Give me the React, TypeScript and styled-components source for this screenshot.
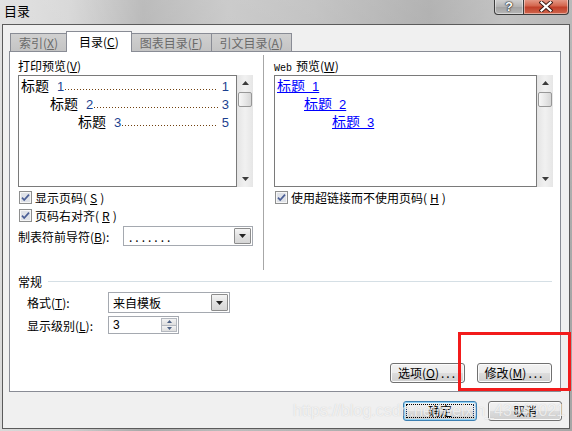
import styled, { createGlobalStyle, css } from 'styled-components';

const GlobalStyle = createGlobalStyle`
  html, body { margin: 0; padding: 0; }
  body { width: 572px; height: 431px; overflow: hidden; background: #b0b0b0; }
  *, *::before, *::after { box-sizing: border-box; }
`;

const Window = styled.div`
  position: relative;
  width: 572px;
  height: 431px;
  display: flex;
  flex-direction: column;
  padding: 0 2px 2px 2px;
  background:
    linear-gradient(180deg, rgba(255, 255, 255, 0.22), rgba(255, 255, 255, 0) 70%),
    linear-gradient(90deg, #dadada 0%, #cfcfcf 12%, #a9a9a9 25%, #bdbdbd 40%, #b4b4b4 55%, #9e9e9e 75%, #b2b2b2 88%, #a6a6a6 100%);
  font-family: "Noto Sans CJK SC", "Liberation Sans", sans-serif;
  font-size: 12px;
  color: #000;
  overflow: hidden;
`;

const TitleBar = styled.div`
  height: 24px;
  display: flex;
  justify-content: space-between;
  align-items: flex-start;
`;

const Title = styled.div`
  padding: 3px 0 0 2px;
  font-size: 13px;
  line-height: 16px;
`;

const Controls = styled.div`
  display: flex;
  margin-right: 1px;
`;

const CtrlButton = styled.div<{ $close?: boolean }>`
  width: ${p => (p.$close ? 46 : 30)}px;
  height: 16px;
  margin-top: -1px;
  display: flex;
  align-items: center;
  justify-content: center;
  border: 1px solid #3d3d3d;
  border-top: none;
  background: linear-gradient(#d4d4d4, #b4b4b4 50%, #a2a2a2 51%, #b6b6b6);
  box-shadow: inset 0 0 0 1px rgba(255, 255, 255, 0.45);
  color: #fff;
  font-family: "Liberation Sans", sans-serif;
  font-weight: 700;
  font-size: 13px;
  line-height: 14px;
  text-shadow: 0 0 1px #222, 0 0 1px #222, 0 0 2px #333;
  ${p => p.$close && css`
    margin-left: -1px;
    border-radius: 0 0 4px 0;
    background: linear-gradient(#e7a08f, #d4674f 45%, #c1402a 55%, #d0664d);
  `}
  ${p => !p.$close && css`border-radius: 0 0 0 4px;`}
`;

const Client = styled.div`
  flex: 1;
  display: flex;
  flex-direction: column;
  border: 1px solid #5b5b5b;
  background: #f0f0f0;
  padding: 6px 8px 0 6px;
`;

const TabRow = styled.div`
  display: flex;
  align-items: flex-end;
  height: 20px;
  padding-left: 1px;
`;

const Tab = styled.div<{ $active?: boolean }>`
  height: 18px;
  padding: 0 8px;
  margin-left: -1px;
  border: 1px solid #898c95;
  border-bottom: none;
  background: linear-gradient(#d0d0d0, #c4c4c4);
  color: #6a6a6a;
  line-height: 17px;
  white-space: nowrap;
  &:first-child { margin-left: 0; }
  ${p => p.$active && css`
    position: relative;
    z-index: 1;
    height: 21px;
    margin-bottom: -1px;
    padding: 0 12px;
    background: #fff;
    color: #000;
    line-height: 20px;
  `}
`;

const Key = styled.span`
  text-decoration: underline;
`;

const Panel = styled.div`
  flex: 1;
  display: flex;
  flex-direction: column;
  border: 1px solid #898c95;
  background: #fff;
  padding: 3px 7px 8px 8px;
`;

const TopSection = styled.div`
  display: flex;
  height: 215px;
`;

const Column = styled.div<{ $width?: number }>`
  display: flex;
  flex-direction: column;
  padding-top: 3px;
  ${p => (p.$width ? css`width: ${p.$width}px;` : css`flex: 1;`)}
`;

const Separator = styled.div`
  width: 1px;
  margin: 0 10px;
  background: #a7a7a7;
`;

const FieldLabel = styled.div`
  height: 16px;
  line-height: 16px;
  white-space: nowrap;
`;

const Mono = styled.span`
  font-family: "Liberation Mono", monospace;
  font-size: 10px;
  margin-right: 4px;
`;

const Preview = styled.div`
  display: flex;
  height: 112px;
  margin-top: 1px;
`;

const ListBox = styled.div`
  flex: 1;
  border: 1px solid #7a7a7a;
  background: #fff;
  padding: 0 7px 0 2px;
`;

const Scrollbar = styled.div`
  width: 16px;
  display: flex;
  flex-direction: column;
  background: linear-gradient(90deg, #e4e4e4, #f1f1f1 50%, #e6e6e6);
`;

const ArrowCell = styled.div`
  height: 16px;
  display: flex;
  align-items: center;
  justify-content: center;
`;

const Thumb = styled.div`
  height: 15px;
  margin: 1px 1px 0 1px;
  border: 1px solid #979797;
  border-radius: 2px;
  background: linear-gradient(90deg, #f7f7f7, #e6e6e6 55%, #d6d6d6);
`;

const Spacer = styled.div`
  flex: 1;
`;

const TocLine = styled.div<{ $indent: number }>`
  display: flex;
  align-items: baseline;
  height: 18px;
  line-height: 18px;
  padding-left: ${p => p.$indent}px;
  white-space: nowrap;
`;

const Heading = styled.span`
  font-size: 14px;
`;

const Num = styled.span<{ $gap?: number }>`
  font-family: "Liberation Sans", sans-serif;
  font-size: 13px;
  color: #1b3f8f;
  margin-left: ${p => p.$gap ?? 0}px;
`;

const Leader = styled.span`
  flex: 1;
  align-self: stretch;
  margin: 0 4px 0 1px;
  background: linear-gradient(90deg, #70400f 1px, transparent 1px) 0 13px / 3px 1px repeat-x;
`;

const WebLine = styled.div<{ $indent: number }>`
  height: 18px;
  line-height: 18px;
  padding-left: ${p => p.$indent}px;
  white-space: nowrap;
`;

const WebLink = styled.a`
  color: #0000ff;
  text-decoration: underline;
  font-size: 14px;
  & span { font-family: "Liberation Sans", sans-serif; font-size: 13px; }
`;

const CheckRow = styled.div<{ $mt?: number }>`
  display: flex;
  align-items: center;
  gap: 3px;
  height: 18px;
  margin-top: ${p => p.$mt ?? 0}px;
  padding-left: 1px;
  white-space: nowrap;
`;

const Row = styled.div<{ $mt: number; $h: number; $indent?: number }>`
  display: flex;
  align-items: center;
  height: ${p => p.$h}px;
  margin-top: ${p => p.$mt}px;
  padding-left: ${p => p.$indent ?? 0}px;
  white-space: nowrap;
`;

const RowLabel = styled.div<{ $width?: number }>`
  ${p => p.$width && css`width: ${p.$width}px;`}
  flex-shrink: 0;
`;

const Select = styled.div<{ $width: number }>`
  width: ${p => p.$width}px;
  height: 20px;
  margin-left: auto;
  display: flex;
  border: 1px solid #a5a9b0;
  background: #fff;
  padding: 1px;
`;

const FixedSelect = styled(Select)`
  margin-left: 0;
  height: 21px;
`;

const SelectText = styled.div<{ $dots?: boolean }>`
  flex: 1;
  padding-left: 3px;
  line-height: 17px;
  ${p => p.$dots && css`letter-spacing: 3px; padding-left: 4px;`}
`;

const DropButton = styled.div`
  width: 17px;
  display: flex;
  align-items: center;
  justify-content: center;
  border: 1px solid #8c8c8c;
  border-radius: 1px;
  background: linear-gradient(#f4f4f4, #e2e2e2 50%, #d6d6d6);
`;

const Spin = styled.div`
  width: 71px;
  height: 18px;
  display: flex;
  border: 1px solid #a5a9b0;
  background: #fff;
  padding: 1px;
`;

const SpinValue = styled.div`
  flex: 1;
  padding-left: 3px;
  font-family: "Liberation Sans", sans-serif;
  line-height: 14px;
`;

const SpinButtons = styled.div`
  width: 16px;
  display: flex;
  flex-direction: column;
`;

const SpinHalf = styled.div`
  flex: 1;
  display: flex;
  align-items: center;
  justify-content: center;
  border: 1px solid #b4b8bf;
  background: linear-gradient(#f3f3f3, #dedede);
  & + & { margin-top: -1px; }
`;

const GroupHeader = styled.div`
  display: flex;
  align-items: center;
  height: 16px;
  margin-top: 3px;
`;

const GroupLine = styled.div`
  flex: 1;
  height: 1px;
  margin: 0 1px 0 6px;
  background: #d5dfe5;
`;

const ButtonRow = styled.div`
  margin-top: auto;
  display: flex;
  justify-content: flex-end;
  gap: 12px;
  padding-right: 1px;
`;

const Button = styled.div<{ $width: number; $focused?: boolean }>`
  position: relative;
  width: ${p => p.$width}px;
  height: 20px;
  display: flex;
  align-items: center;
  justify-content: center;
  border: 1px solid #707070;
  border-radius: 3px;
  background: linear-gradient(#f2f2f2, #ebebeb 50%, #dddddd 51%, #cfcfcf);
  box-shadow: inset 0 0 0 1px #fbfbfb;
  line-height: 16px;
  white-space: nowrap;
  & i { font-style: normal; letter-spacing: 2px; margin-left: 2px; }
  ${p => p.$focused && css`
    border-color: #3c7fb1;
    box-shadow: inset 0 0 0 1px #8fd3f7;
    &::after {
      content: '';
      position: absolute;
      inset: 2px;
      border: 1px dotted #000;
    }
  `}
`;

const Footer = styled.div`
  height: 36px;
  display: flex;
  justify-content: flex-end;
  align-items: flex-start;
  gap: 11px;
  padding-top: 9px;
  margin-right: -1px;
`;

const Watermark = styled.div`
  position: absolute;
  left: 293px;
  top: 400px;
  font-family: "Liberation Sans", sans-serif;
  font-size: 16px;
  line-height: 22px;
  color: rgba(255, 255, 255, 0.72);
  text-shadow: 0 0 1px rgba(120, 120, 120, 0.35);
  white-space: nowrap;
  pointer-events: none;
`;

const Highlight = styled.div`
  position: absolute;
  left: 458px;
  top: 332px;
  width: 113px;
  height: 59px;
  border: 3px solid #f21b1b;
  pointer-events: none;
`;

function CheckBox() {
  return (
    <svg width="13" height="13" viewBox="0 0 13 13">
      <rect x="0.5" y="0.5" width="12" height="12" fill="#f6f6f6" stroke="#8e8f8f" />
      <rect x="2" y="2" width="9" height="9" fill="#dfe2e8" />
      <path d="M3 6.6 L5.2 9 L10 3.6" stroke="#4a5e96" strokeWidth="1.7" fill="none" />
    </svg>
  );
}

function Arrow({ up, color = '#222', size = 7 }: { up?: boolean; color?: string; size?: number }) {
  const h = Math.ceil(size / 2);
  return (
    <svg width={size} height={h} viewBox={`0 0 ${size} ${h}`}>
      <path d={up ? `M0 ${h} L${size / 2} 0 L${size} ${h} Z` : `M0 0 L${size} 0 L${size / 2} ${h} Z`} fill={color} />
    </svg>
  );
}

function CloseGlyph() {
  return (
    <svg width="14" height="11" viewBox="0 0 14 11">
      <path d="M2.5 1.5 L11.5 9.5 M11.5 1.5 L2.5 9.5" stroke="#3a1a14" strokeWidth="4" strokeLinecap="square" />
      <path d="M2.5 1.5 L11.5 9.5 M11.5 1.5 L2.5 9.5" stroke="#fff" strokeWidth="2.2" strokeLinecap="square" />
    </svg>
  );
}

function ScrollTrack() {
  return (
    <Scrollbar>
      <ArrowCell><Arrow up color="#3c3c3c" /></ArrowCell>
      <Thumb />
      <Spacer />
      <ArrowCell><Arrow color="#3c3c3c" /></ArrowCell>
    </Scrollbar>
  );
}

const tocLines = [
  { level: 1, indent: 0, page: 1 },
  { level: 2, indent: 29, page: 3 },
  { level: 3, indent: 57, page: 5 },
];

const webLines = [
  { level: 1, indent: 0 },
  { level: 2, indent: 27 },
  { level: 3, indent: 55 },
];

export default function App() {
  return (
    <Window>
      <GlobalStyle />
      <TitleBar>
        <Title>目录</Title>
        <Controls>
          <CtrlButton>?</CtrlButton>
          <CtrlButton $close><CloseGlyph /></CtrlButton>
        </Controls>
      </TitleBar>
      <Client>
        <TabRow>
          <Tab>索引(<Key>X</Key>)</Tab>
          <Tab $active>目录(<Key>C</Key>)</Tab>
          <Tab>图表目录(<Key>F</Key>)</Tab>
          <Tab>引文目录(<Key>A</Key>)</Tab>
        </TabRow>
        <Panel>
          <TopSection>
            <Column $width={235}>
              <FieldLabel>打印预览(<Key>V</Key>)</FieldLabel>
              <Preview>
                <ListBox>
                  {tocLines.map(l => (
                    <TocLine key={l.level} $indent={l.indent}>
                      <Heading>标题</Heading>
                      <Num $gap={8}>{l.level}</Num>
                      <Leader />
                      <Num>{l.page}</Num>
                    </TocLine>
                  ))}
                </ListBox>
                <ScrollTrack />
              </Preview>
              <CheckRow $mt={1}><CheckBox />显示页码(<Key>S</Key>)</CheckRow>
              <CheckRow><CheckBox />页码右对齐(<Key>R</Key>)</CheckRow>
              <Row $mt={2} $h={20}>
                <RowLabel>制表符前导符(<Key>B</Key>):</RowLabel>
                <Select $width={130}>
                  <SelectText $dots>.......</SelectText>
                  <DropButton><Arrow /></DropButton>
                </Select>
              </Row>
            </Column>
            <Separator />
            <Column>
              <FieldLabel><Mono>Web</Mono>预览(<Key>W</Key>)</FieldLabel>
              <Preview>
                <ListBox>
                  {webLines.map(l => (
                    <WebLine key={l.level} $indent={l.indent}>
                      <WebLink>标题{'\u2002'}<span>{l.level}</span></WebLink>
                    </WebLine>
                  ))}
                </ListBox>
                <ScrollTrack />
              </Preview>
              <CheckRow $mt={1}><CheckBox />使用超链接而不使用页码(<Key>H</Key>)</CheckRow>
            </Column>
          </TopSection>
          <GroupHeader>
            常规
            <GroupLine />
          </GroupHeader>
          <Row $mt={3} $h={21} $indent={9}>
            <RowLabel $width={81}>格式(<Key>T</Key>):</RowLabel>
            <FixedSelect $width={122}>
              <SelectText>来自模板</SelectText>
              <DropButton><Arrow /></DropButton>
            </FixedSelect>
          </Row>
          <Row $mt={3} $h={18} $indent={9}>
            <RowLabel $width={81}>显示级别(<Key>L</Key>):</RowLabel>
            <Spin>
              <SpinValue>3</SpinValue>
              <SpinButtons>
                <SpinHalf><Arrow up size={5} color="#4d6185" /></SpinHalf>
                <SpinHalf><Arrow size={5} color="#4d6185" /></SpinHalf>
              </SpinButtons>
            </Spin>
          </Row>
          <ButtonRow>
            <Button $width={75}>选项(<Key>O</Key>)<i>...</i></Button>
            <Button $width={75}>修改(<Key>M</Key>)<i>...</i></Button>
          </ButtonRow>
        </Panel>
        <Footer>
          <Button $width={74} $focused>确定</Button>
          <Button $width={74}>取消</Button>
        </Footer>
      </Client>
      <Watermark>https://blog.csdn.net/weixin_43943021</Watermark>
      <Highlight />
    </Window>
  );
}
